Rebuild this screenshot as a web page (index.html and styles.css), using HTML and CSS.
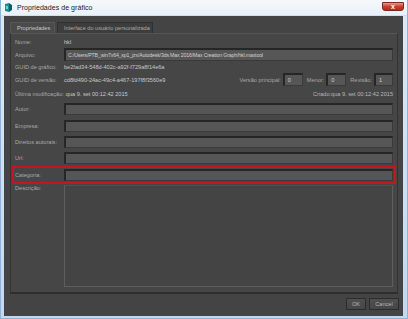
FILE: index.html
```html
<!DOCTYPE html>
<html>
<head>
<meta charset="utf-8">
<link rel="stylesheet" href="styles.css">
</head>
<body>
<div class="window">
  <div class="titlebar">
    <svg class="appicon" width="7" height="9" viewBox="0 0 7 9"><path d="M0 1 L4 0 L4 9 L0 8 Z" fill="#1f8c8c"/><path d="M4 0 L7 2 L7 7 L4 9 Z" fill="#0c5e63"/><path d="M1 3 L3 3 L3 6 L1 6 Z" fill="#6fd0cf"/></svg>
    <span class="title">Propriedades de gráfico</span>
    <div class="close"><span>x</span></div>
  </div>
  <div class="client">
    <div class="tabs">
      <div class="tab active">Propriedades</div>
      <div class="tab other">Interface do usuário personalizada</div>
    </div>
    <div class="panel">
      <div class="row r-nome"><span class="label">Nome:</span><span class="value">hkl</span></div>
      <div class="row r-arquivo"><span class="label">Arquivo:</span><div class="field grow"><span class="ftext path">C:/Users/PTB_win7x64_sp1_jzx/Autodesk/3ds Max 2016/Max Creation Graph/hkl.maxtool</span></div></div>
      <div class="row r-guid1"><span class="label">GUID de gráfico:</span><span class="value">be2fad34-548d-402c-a92f-f729a8f14e6a</span></div>
      <div class="row r-guid2"><span class="label">GUID de versão:</span><span class="value">cd8fd490-24ac-49c4-a467-197f8f3560e9</span>
        <div class="versions">
          <span class="vlabel">Versão principal:</span><div class="field small"><span class="ftext">0</span></div>
          <span class="vlabel">Menor:</span><div class="field small"><span class="ftext">0</span></div>
          <span class="vlabel">Revisão:</span><div class="field small"><span class="ftext">1</span></div>
        </div>
      </div>
      <div class="row r-mod"><span class="label wide">Última modificação:</span><span class="value">qua 9. set 00:12:42 2015</span><span class="created">Criado:qua 9. set 00:12:42 2015</span></div>
      <div class="row r-field r-autor"><span class="label">Autor:</span><div class="field grow"></div></div>
      <div class="row r-field r-emp"><span class="label">Empresa:</span><div class="field grow"></div></div>
      <div class="row r-field r-dir"><span class="label">Direitos autorais:</span><div class="field grow"></div></div>
      <div class="row r-field r-url"><span class="label">Url:</span><div class="field grow"></div></div>
      <div class="row r-field r-cat highlight"><span class="label">Categoria:</span><div class="field grow"></div></div>
      <div class="row r-desc"><span class="label">Descrição:</span><div class="textarea"></div></div>
    </div>
    <div class="buttons">
      <div class="btn ok">OK</div>
      <div class="btn cancel">Cancel</div>
    </div>
  </div>
</div>
</body>
</html>
```
FILE: styles.css
```css
html, body {
  margin: 0;
  padding: 0;
}
body {
  width: 408px;
  height: 319px;
  overflow: hidden;
  font-family: "Liberation Sans", sans-serif;
  background: #c9dcef;
}
.window {
  width: 408px;
  height: 319px;
  box-sizing: border-box;
  display: flex;
  flex-direction: column;
  background: linear-gradient(#dde9f5, #c3d8ee);
  border-left: 1px solid #8fb2d6;
  border-right: 1px solid #8fb2d6;
  border-bottom: 1px solid #8fb2d6;
  padding: 0 4px 2px 3px;
}
.titlebar {
  height: 16px;
  display: flex;
  align-items: center;
  margin: 0 -4px 0 -3px;
  padding: 0 4px 0 4px;
  background: linear-gradient(#f6f9fc, #e8f0f8);
  border-bottom: 1px solid #cfdfef;
  box-sizing: border-box;
}
.appicon {
  margin-right: 5px;
}
.title {
  font-size: 7px;
  color: #1a1a1a;
  letter-spacing: 0.05px;
}
.close {
  margin-left: auto;
  margin-right: -1px;
  align-self: flex-start;
  margin-top: 2px;
  width: 22px;
  height: 9px;
  border-radius: 0 0 3px 3px;
  background: linear-gradient(#e99a8c, #c9402d 50%, #b52a18);
  border: 1px solid #7d2a22;
  box-sizing: border-box;
  display: flex;
  align-items: center;
  justify-content: center;
}
.close span {
  color: #fff;
  font-weight: bold;
  font-size: 7px;
  line-height: 7px;
}
.client {
  flex: 1;
  background: #444444;
  display: flex;
  flex-direction: column;
  padding: 6px 4px 6px 6px;
}
.tabs {
  display: flex;
  height: 11px;
  gap: 2px;
}
.tab {
  font-size: 5.6px;
  color: #a9a9a9;
  height: 11px;
  box-sizing: border-box;
  padding: 0 0 0 6px;
  display: flex;
  align-items: center;
  white-space: nowrap;
  border: 1px solid #303030;
  border-bottom: none;
  background: #3d3d3d;
}
.tab.active {
  background: #4a4a4a;
  color: #c8c8c8;
  width: 45px;
  border-color: #575757;
}
.tab.other {
  width: 96px;
}
.panel {
  width: 388px;
  height: 261px;
  box-sizing: border-box;
  border: 1px solid #333;
  border-top-color: #555;
  border-bottom: 2px solid #2e2e2e;
  background: #464646;
  padding: 3px 4px 0 4px;
  display: flex;
  flex-direction: column;
}
.row {
  display: flex;
  align-items: center;
  font-size: 5.6px;
}
.label {
  color: #a8a8a8;
  width: 49px;
  flex: none;
  white-space: nowrap;
}
.label.wide {
  width: auto;
  margin-right: 2px;
}
.value {
  color: #c6c6c6;
  white-space: nowrap;
}
.field {
  height: 13px;
  box-sizing: border-box;
  background: #565656;
  border-top: 2px solid #262626;
  border-left: 2px solid #262626;
  border-right: 1px solid #3a3a3a;
  border-bottom: 1px solid #3a3a3a;
  display: flex;
  align-items: center;
  padding-left: 2px;
  color: #d0d0d0;
}
.field.grow {
  flex: 1;
}
.ftext {
  white-space: nowrap;
}
.ftext.path {
  font-size: 5.2px;
  letter-spacing: -0.15px;
}
.r-nome { height: 10px; }
.r-arquivo { height: 13px; margin-top: 1px; }
.r-guid1 { height: 12px; }
.r-guid2 { height: 13px; }
.r-mod { height: 16px; }
.r-field { height: 12px; }
.r-field .field { height: 12px; }
.r-autor { margin-top: 1px; }
.r-emp { margin-top: 5px; }
.r-dir { margin-top: 4px; }
.r-url { margin-top: 4px; }
.r-cat { margin-top: 5px; }
.versions {
  margin-left: auto;
  display: flex;
  align-items: center;
}
.vlabel {
  color: #a8a8a8;
  margin-right: 2px;
  margin-left: 4px;
  white-space: nowrap;
}
.field.small {
  width: 20px;
  padding-left: 3px;
}
.versions .field.small:last-child {
  width: 19px;
}
.created {
  margin-left: auto;
  color: #b8b8b8;
  white-space: nowrap;
}
.highlight {
  outline: 2px solid #c8141c;
  outline-offset: 1px;
}
.r-desc {
  align-items: flex-start;
  margin-top: 4px;
  height: 102px;
}
.textarea {
  flex: 1;
  height: 102px;
  box-sizing: border-box;
  border: 1px solid #5e5e5e;
  border-top-color: #505050;
  background: #444;
}
.buttons {
  display: flex;
  justify-content: flex-end;
  gap: 3px;
  margin-top: 4px;
}
.btn {
  height: 12px;
  box-sizing: border-box;
  border: 1px solid #2c2c2c;
  background: linear-gradient(#505050, #464646);
  font-size: 5.6px;
  color: #b8b8b8;
  display: flex;
  align-items: center;
  justify-content: center;
}
.btn.ok { width: 20px; }
.btn.cancel { width: 30px; }
```
